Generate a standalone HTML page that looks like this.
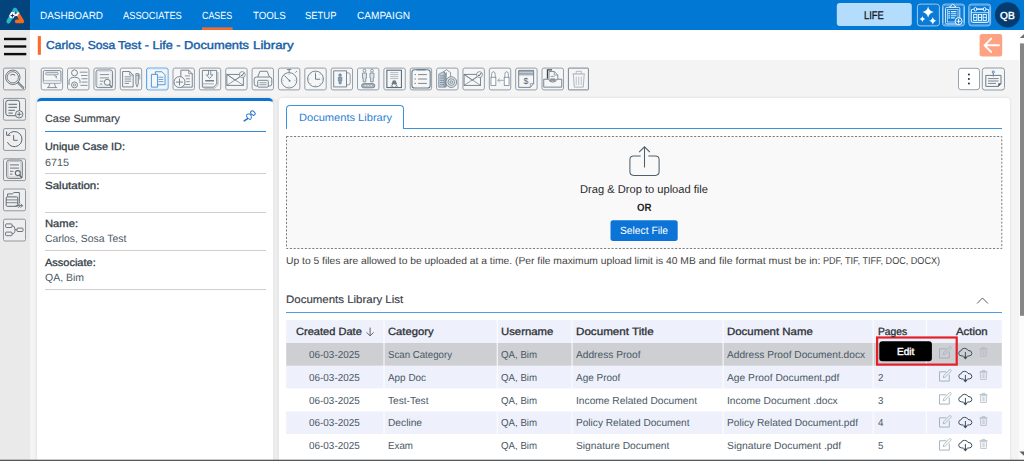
<!DOCTYPE html>
<html lang="en"><head><meta charset="utf-8"><title>Documents Library</title>
<style>
html,body{margin:0;padding:0}
body{width:1024px;height:461px;overflow:hidden;position:relative;background:#f4f4f4;font-family:'Liberation Sans',sans-serif;text-rendering:geometricPrecision}
.a{position:absolute;box-sizing:border-box}
.t{position:absolute;white-space:pre;line-height:14px;transform-origin:0 0}
svg{position:absolute;overflow:visible}
.ib{position:absolute;box-sizing:border-box;border:1px solid #8d9aa6;border-radius:2.5px;background:#f6f6f6;box-shadow:inset 0 0 0 1px #e3e6ea}
</style></head><body>

<div class="a" style="left:0;top:0;width:1024px;height:29.8px;background:#0078d4"></div>
<div class="a" style="left:0;top:0;width:30px;height:29.8px;background:#04447c"></div>
<div class="a" style="left:0;top:29.8px;width:30px;height:432px;background:#eaeaea"></div>
<div class="a" style="left:30px;top:29.8px;width:989px;height:29.8px;background:#fff"></div>
<div class="a" style="left:1018.6px;top:29.8px;width:5.4px;height:432px;background:#fbfbfb"></div>
<div class="a" style="left:37.3px;top:97.7px;width:236px;height:370px;background:#fff;border-top:3px solid #0b74d1;border-radius:4.5px 4.5px 0 0;box-shadow:0 0 3px rgba(0,0,0,.15)"></div>
<div class="a" style="left:273.3px;top:99px;width:5.2px;height:362px;background:linear-gradient(90deg,#e6e6e6,#eeeeee 40%,#ececec)"></div>
<div class="a" style="left:45.4px;top:131px;width:220.4px;height:1px;background:#2f8bdc"></div>
<div class="a" style="left:45.4px;top:173.0px;width:220.4px;height:1px;background:#cfcfcf"></div>
<div class="a" style="left:45.4px;top:211.5px;width:220.4px;height:1px;background:#cfcfcf"></div>
<div class="a" style="left:45.4px;top:250.0px;width:220.4px;height:1px;background:#cfcfcf"></div>
<div class="a" style="left:45.4px;top:288.5px;width:220.4px;height:1px;background:#cfcfcf"></div>
<div class="a" style="left:278.5px;top:98px;width:731.6px;height:370px;background:#fff;border-radius:3.5px 3.5px 0 0;box-shadow:0 0 3px rgba(0,0,0,.13)"></div>
<div class="a" style="left:286px;top:128px;width:716px;height:1px;background:#3b93e0"></div>
<div class="a" style="left:286px;top:105.3px;width:117.8px;height:24px;background:#fff;border:1px solid #3b93e0;border-bottom:none;border-radius:4px 4px 0 0"></div>
<div class="a" style="left:286px;top:312px;width:716px;height:1px;background:#4a9fe8"></div>
<svg style="left:0;top:0" width="1024" height="461" viewBox="0 0 1024 461"><rect x="202" y="27.4" width="30.6" height="2.5" fill="#ff6a2b"/>
<rect x="836.8" y="3" width="75" height="23" rx="3" fill="#b4dcfc"/>
<rect x="917.40" y="4.10" width="22.00" height="21.80" rx="2.6" fill="#0a7bd7" stroke="#9acbf3" stroke-width="1"/>
<rect x="942.50" y="4.10" width="22.00" height="21.80" rx="2.6" fill="#0a7bd7" stroke="#9acbf3" stroke-width="1"/>
<rect x="968.80" y="4.10" width="21.80" height="21.80" rx="2.6" fill="#0a7bd7" stroke="#9acbf3" stroke-width="1"/>
<rect x="943.6" y="5.2" width="19.8" height="19.6" rx="1.6" fill="none" stroke="#6db3ee" stroke-width="0.9"/>
<rect x="969.9" y="5.2" width="19.6" height="19.6" rx="1.6" fill="none" stroke="#6db3ee" stroke-width="0.9"/>
<g transform="translate(0 0)"><path d="M928.1 6.5Q929.1080000000001 11.091999999999999 933.7 12.1Q929.1080000000001 13.108 928.1 17.7Q927.092 13.108 922.5 12.1Q927.092 11.091999999999999 928.1 6.5zM922.4 16.3Q922.904 18.596 925.1999999999999 19.1Q922.904 19.604000000000003 922.4 21.900000000000002Q921.896 19.604000000000003 919.6 19.1Q921.896 18.596 922.4 16.3zM932.8 16.900000000000002Q933.502 20.098 936.6999999999999 20.8Q933.502 21.502000000000002 932.8 24.7Q932.098 21.502000000000002 928.9 20.8Q932.098 20.098 932.8 16.900000000000002z" fill="#fff"/></g>
<g transform="translate(0 0)"><rect x="945.6" y="7.3" width="14.2" height="16.6" rx="1.2" fill="none" stroke="#dcecfb" stroke-width="1"/>
<rect x="947.4" y="9.6" width="10.6" height="12.4" fill="none" stroke="#dcecfb" stroke-width="0.7"/>
<path d="M949.6 7.2Q949.8 5.6 951.4 5.6Q951.6 4.2 952.7 4.2Q953.8 4.2 954 5.6Q955.6 5.6 955.8 7.2z" fill="#0a7bd7" stroke="#fff" stroke-width="0.9"/>
<path d="M948.4 11.6h1.4M948.4 13.7h1.4M948.4 15.8h1.4M948.4 17.9h1.4" stroke="#fff" stroke-width="1.2"/>
<path d="M950.8 11.6h5.6M950.8 13.7h5.6M950.8 15.8h5.6M950.8 17.9h4" stroke="#dcecfb" stroke-width="1.1"/>
<circle cx="958.6" cy="21.2" r="3.5" fill="#0a7bd7" stroke="#fff" stroke-width="1"/>
<path d="M956.4 21.2h4.4M958.6 19v4.4" stroke="#fff" stroke-width="1.1"/></g>
<g transform="translate(0 0)"><rect x="971.3" y="9.2" width="17.4" height="13.2" rx="1.8" fill="none" stroke="#dcecfb" stroke-width="1.1"/>
<path d="M971.6 12.6h16.8" stroke="#dcecfb" stroke-width="0.8"/>
<ellipse cx="975.4" cy="9.2" rx="1.3" ry="1.8" fill="#0a7bd7" stroke="#fff" stroke-width="0.9"/><ellipse cx="984.6" cy="9.2" rx="1.3" ry="1.8" fill="#0a7bd7" stroke="#fff" stroke-width="0.9"/>
<path d="M976.8 9h6.4" stroke="#fff" stroke-width="0.9"/>
<rect x="973.7" y="14.4" width="3.2" height="6" fill="none" stroke="#fff" stroke-width="0.9"/><rect x="978.4" y="14.4" width="3.2" height="6" fill="none" stroke="#fff" stroke-width="0.9"/><rect x="983.1" y="14.4" width="3.2" height="6" fill="none" stroke="#fff" stroke-width="0.9"/>
<path d="M973.7 17.4h3.2M978.4 17.4h3.2M983.1 17.4h3.2" stroke="#fff" stroke-width="0.8"/></g>
<circle cx="1007.5" cy="14.8" r="12.6" fill="#053b6e"/>
<g transform="translate(0 0)"><path d="M8.4 21.6L15 9.8" stroke="#2bb6c6" stroke-width="4" stroke-linecap="round" fill="none"/>
<path d="M15 9.8L17.6 13.4" stroke="#2bb6c6" stroke-width="4" stroke-linecap="round" fill="none"/>
<path d="M18.6 15.2L22.3 21.4H16.8" stroke="#f26b1e" stroke-width="3.8" stroke-linecap="round" stroke-linejoin="round" fill="none"/>
<path d="M9.2 15.4L11.2 12L19.4 12.4L17.6 15.8L14.6 16.2L13.2 18.6L10 17.8z" fill="#fff"/>
<path d="M12.4 13.2L13 15L14.8 15.6L13 16.2L12.4 18L11.8 16.2L10 15.6L11.8 15z" fill="#14246b"/>
<path d="M15.8 11.2L16.3 12.4L17.5 12.9L16.3 13.4L15.8 14.6L15.3 13.4L14.1 12.9L15.3 12.4z" fill="#14246b"/></g>
<rect x="4" y="37.8" width="22.3" height="2.4" fill="#0c0c0c"/>
<rect x="4" y="45.3" width="22.3" height="2.4" fill="#0c0c0c"/>
<rect x="4" y="52.9" width="22.3" height="2.4" fill="#0c0c0c"/>
<rect x="37.8" y="36.1" width="3.1" height="18.7" fill="#ff6a2b"/>
<rect x="979.6" y="34" width="22.6" height="22.4" rx="2.5" fill="#ffa183"/>
<g transform="translate(979.6 34)"><path d="M19.4 11.3H5.4M11.6 4.6L4.9 11.3l6.7 6.7" fill="none" stroke="#fff" stroke-width="1.9" stroke-linecap="round" stroke-linejoin="round"/></g>
<rect x="1020" y="43.4" width="4" height="272.4" fill="#868686"/>
<g transform="translate(1018.6 29.8)"><path d="M1.2 8.1L5.4 4.2V8.1z" fill="#6c6c6c"/><path d="M0.8 421.6H5.4V426z" fill="#606060"/></g>
<rect x="3.50" y="68.10" width="22.00" height="21.80" rx="1.5" fill="#eeeeee" stroke="#8f989f" stroke-width="1"/>
<g transform="translate(3 67.6)"><circle cx="9.8" cy="9.7" r="7.2" fill="none" stroke="#5d6870" stroke-width="0.9"/><circle cx="9.8" cy="9.7" r="5.6" fill="none" stroke="#5d6870" stroke-width="0.8"/><path d="M7.4 7.6Q9.8 6 12.2 7.6" fill="none" stroke="#5d6870" stroke-width="1"/><path d="M15.2 15.2L20.2 20.2" stroke="#5d6870" stroke-width="2.1" stroke-linecap="round"/><path d="M15.2 15.2L20.2 20.2" stroke="#e8e8e8" stroke-width="0.7" stroke-linecap="round"/></g>
<rect x="3.50" y="98.40" width="22.00" height="21.80" rx="1.5" fill="#eeeeee" stroke="#8f989f" stroke-width="1"/>
<g transform="translate(3 97.9)"><rect x="2.8" y="2.4" width="13.8" height="15.4" rx="2.4" fill="none" stroke="#5d6870" stroke-width="1"/><path d="M5.4 6.4h8.6M5.4 9.4h8.6M5.4 12.4h6.4M5.4 15.2h4.4" stroke="#5d6870" stroke-width="1"/><circle cx="16.2" cy="16.4" r="3.7" fill="#efefef" stroke="#5d6870" stroke-width="0.9"/><path d="M13.9 16.4h4.6M16.2 14.1v4.6" stroke="#5d6870" stroke-width="0.9"/></g>
<rect x="3.50" y="128.60" width="22.00" height="21.80" rx="1.5" fill="#eeeeee" stroke="#8f989f" stroke-width="1"/>
<g transform="translate(3 128.1)"><path d="M5.2 6.6A7.6 7.6 0 1 1 4.4 14" fill="none" stroke="#5d6870" stroke-width="1"/><path d="M3.6 3.4V7.2H7.4" fill="none" stroke="#5d6870" stroke-width="1"/><path d="M10.6 7V12.2H14.6" fill="none" stroke="#5d6870" stroke-width="1"/></g>
<rect x="3.50" y="158.80" width="22.00" height="21.80" rx="1.5" fill="#eeeeee" stroke="#8f989f" stroke-width="1"/>
<g transform="translate(3 158.3)"><rect x="3.6" y="1.8" width="15.8" height="18.4" rx="2.6" fill="none" stroke="#5d6870" stroke-width="0.8"/><rect x="5" y="3.2" width="13" height="15.6" rx="1.8" fill="none" stroke="#9aa3aa" stroke-width="0.6"/><path d="M7 6.6h9M7 9.8h9M7 13h3.4M7 15.8h2.4" stroke="#5d6870" stroke-width="0.9"/><circle cx="14.8" cy="14.8" r="2.5" fill="#eeeeee" stroke="#5d6870" stroke-width="1.1"/><path d="M16.6 16.8L19 19.6" stroke="#5d6870" stroke-width="1.5"/></g>
<rect x="3.50" y="189.00" width="22.00" height="21.80" rx="1.5" fill="#eeeeee" stroke="#8f989f" stroke-width="1"/>
<g transform="translate(3 188.5)"><path d="M4.6 8.2V5.4H9.6L10.8 4h5.6V15" fill="none" stroke="#5d6870" stroke-width="0.9"/><rect x="3.2" y="8.4" width="11.6" height="9.4" rx="1" fill="none" stroke="#5d6870" stroke-width="1"/><path d="M3.4 11.4h11.2M3.4 14.2h11.2" stroke="#5d6870" stroke-width="0.8"/><path d="M12.6 17.2h7M17.6 15.2l2 2-2 2M15.2 15.2l2 2-2 2" fill="none" stroke="#5d6870" stroke-width="0.9"/></g>
<rect x="3.50" y="219.20" width="22.00" height="21.80" rx="1.5" fill="#eeeeee" stroke="#8f989f" stroke-width="1"/>
<g transform="translate(3 218.7)"><rect x="2.6" y="5.2" width="6.4" height="3.6" rx="0.8" fill="none" stroke="#5d6870" stroke-width="0.9"/><rect x="2.6" y="13.4" width="6.4" height="3.6" rx="0.8" fill="none" stroke="#5d6870" stroke-width="0.9"/><rect x="14" y="9.4" width="6" height="3.4" rx="0.8" fill="none" stroke="#5d6870" stroke-width="0.9"/><path d="M9 7Q12 7 12 11Q12 15.2 9 15.2M12 11.1h2" fill="none" stroke="#5d6870" stroke-width="0.9"/></g>
<rect x="41.20" y="68.10" width="21.40" height="21.80" rx="1.8" fill="#f6f6f6" stroke="#929ea9" stroke-width="1"/>
<g transform="translate(39.80 66.68) scale(1.1)"><rect x="3.2" y="3.6" width="16" height="11.6" rx="1" fill="none" stroke="#6a7b89" stroke-width="0.82"/><path d="M3.4 12.6h15.6" stroke="#6a7b89" stroke-width="0.57"/><rect x="5.2" y="5.2" width="11.6" height="2.2" rx="1.1" fill="#dfe4e8" stroke="#6a7b89" stroke-width="0.57"/><rect x="3.4" y="12.6" width="15.6" height="2.6" fill="#e3e7ea"/><path d="M13 8l2.6 1.2-1 .4.8 1.2" fill="none" stroke="#6a7b89" stroke-width="0.66"/><path d="M9 15.4L8 18.8M13.4 15.4l1 3.4M6.6 19h9.2" stroke="#6a7b89" stroke-width="0.74"/></g>
<rect x="67.56" y="68.10" width="21.40" height="21.80" rx="1.8" fill="#f6f6f6" stroke="#929ea9" stroke-width="1"/>
<g transform="translate(66.16 66.68) scale(1.1)"><circle cx="7.6" cy="5.6" r="2.7" fill="none" stroke="#6a7b89" stroke-width="0.82"/><path d="M2.6 16.6V13.4Q2.6 9.6 7.6 9.6Q12.6 9.6 12.6 13.4V15" fill="none" stroke="#6a7b89" stroke-width="0.82"/><path d="M12.4 5h7M13.6 8h5.8M14 11h5.4M14 14h5.4M13 17h6.4" stroke="#6a7b89" stroke-width="0.74"/><circle cx="7.6" cy="16.6" r="2.7" fill="#f6f6f6" stroke="#6a7b89" stroke-width="0.82"/><circle cx="7.6" cy="16.6" r="1" fill="none" stroke="#6a7b89" stroke-width="0.66"/></g>
<rect x="93.92" y="68.10" width="21.40" height="21.80" rx="1.8" fill="#f6f6f6" stroke="#929ea9" stroke-width="1"/>
<g transform="translate(92.52 66.68) scale(1.1)"><rect x="3.2" y="3" width="15" height="16" rx="2" fill="none" stroke="#6a7b89" stroke-width="0.82"/><rect x="4.6" y="4.4" width="12.2" height="13.2" rx="1.2" fill="none" stroke="#b4bec7" stroke-width="0.41"/><path d="M6.6 7.2h8.4M6.6 10.2h8.4M6.6 13.2h3.4M6.6 15.8h2.4" stroke="#6a7b89" stroke-width="0.74"/><circle cx="13.4" cy="14.2" r="2.7" fill="#f6f6f6" stroke="#6a7b89" stroke-width="0.90"/><path d="M15.4 16.2L18 19" stroke="#6a7b89" stroke-width="1.23"/></g>
<rect x="120.28" y="68.10" width="21.40" height="21.80" rx="1.8" fill="#f6f6f6" stroke="#929ea9" stroke-width="1"/>
<g transform="translate(118.88 66.68) scale(1.1)"><path d="M3.4 4.4H9.8L13 7.6V18.4H3.4z" fill="none" stroke="#6a7b89" stroke-width="0.82"/><path d="M9.8 4.4V7.6H13" fill="none" stroke="#6a7b89" stroke-width="0.66"/><path d="M5.2 9.2h6M5.2 11.2h6M5.2 13.2h6M5.2 15.2h4" stroke="#6a7b89" stroke-width="0.74"/><path d="M15.4 6.2H17.8V15.2L16.6 18.6 15.4 15.2z" fill="#d5dbe0" stroke="#6a7b89" stroke-width="0.66"/><path d="M15.4 8h2.4" stroke="#6a7b89" stroke-width="0.49"/><path d="M17.8 7.2h1.2v4.4" fill="none" stroke="#6a7b89" stroke-width="0.57"/></g>
<rect x="146.64" y="68.10" width="21.40" height="21.80" rx="1.8" fill="#f6f6f6" stroke="#4c9be6" stroke-width="1"/><rect x="147.64" y="69.10" width="19.40" height="19.80" rx="0.8" fill="none" stroke="#d6e8f9" stroke-width="1"/>
<g transform="translate(145.24 66.68) scale(1.1)"><path d="M9.2 4.6H15.2L18 7.4V16.4H9.2z" fill="#f6f6f6" stroke="#3f8edc" stroke-width="0.82"/><path d="M12 9.6h4.4M12 11.6h4.4M12 13.6h4.4" stroke="#3f8edc" stroke-width="0.74"/><path d="M5.6 7H11.2V18.6H5.6z" fill="#f6f6f6" stroke="#3f8edc" stroke-width="0.82"/></g>
<rect x="173.00" y="68.10" width="21.40" height="21.80" rx="1.8" fill="#f6f6f6" stroke="#929ea9" stroke-width="1"/>
<g transform="translate(171.60 66.68) scale(1.1)"><path d="M8.4 3.2H15.6L18.8 6.4V18.6H8.4z" fill="none" stroke="#6a7b89" stroke-width="0.82"/><path d="M15.6 3.2V6.4H18.8" fill="none" stroke="#6a7b89" stroke-width="0.66"/><path d="M12 8.4h4.6M13 11h3.6M13.4 13.6h3.2M12.4 16.2h4.2" stroke="#6a7b89" stroke-width="0.74"/><circle cx="7.2" cy="14" r="5" fill="#f6f6f6" stroke="#6a7b89" stroke-width="0.82"/><path d="M4 14h6.4M7.2 10.8v6.4" stroke="#6a7b89" stroke-width="0.82"/></g>
<rect x="199.36" y="68.10" width="21.40" height="21.80" rx="1.8" fill="#f6f6f6" stroke="#929ea9" stroke-width="1"/>
<g transform="translate(197.96 66.68) scale(1.1)"><path d="M4 3.4H17V15.6L14.4 18.6H4z" fill="none" stroke="#6a7b89" stroke-width="0.82"/><path d="M5.4 19.6H15.2L18.2 16.4V5" fill="none" stroke="#6a7b89" stroke-width="0.49"/><path d="M9.6 3.6V7.4H7.6L10.6 10.8 13.6 7.4H11.6V3.6" fill="none" stroke="#6a7b89" stroke-width="0.74"/><path d="M6.6 12.8h8" stroke="#6a7b89" stroke-width="1.31"/><path d="M4.2 15.6h10.2" stroke="#6a7b89" stroke-width="0.57"/></g>
<rect x="225.72" y="68.10" width="21.40" height="21.80" rx="1.8" fill="#f6f6f6" stroke="#929ea9" stroke-width="1"/>
<g transform="translate(224.32 66.68) scale(1.1)"><rect x="2.3" y="7" width="15" height="10" fill="none" stroke="#6a7b89" stroke-width="0.82"/><path d="M2.3 7L17.3 17M17.3 7L2.3 17M2.3 7L9.8 12.4 17.3 7" fill="none" stroke="#6a7b89" stroke-width="0.66"/><circle cx="16.3" cy="7.2" r="2.7" fill="#f6f6f6" stroke="#6a7b89" stroke-width="0.66"/><path d="M14.9 7.4l1 1 2-2.6" fill="none" stroke="#4f6070" stroke-width="0.90"/></g>
<rect x="252.08" y="68.10" width="21.40" height="21.80" rx="1.8" fill="#f6f6f6" stroke="#929ea9" stroke-width="1"/>
<g transform="translate(250.68 66.68) scale(1.1)"><path d="M6.4 9.4L8.4 4.2H15L17 9.4" fill="none" stroke="#6a7b89" stroke-width="0.82"/><rect x="3.2" y="9.4" width="16" height="8.2" rx="2" fill="none" stroke="#6a7b89" stroke-width="0.82"/><rect x="6.4" y="12.4" width="9.6" height="6.2" rx="0.8" fill="#f6f6f6" stroke="#6a7b89" stroke-width="0.82"/><path d="M8 14.6h6.4M8 16.4h6.4" stroke="#6a7b89" stroke-width="0.66"/></g>
<rect x="278.44" y="68.10" width="21.40" height="21.80" rx="1.8" fill="#f6f6f6" stroke="#929ea9" stroke-width="1"/>
<g transform="translate(277.04 66.68) scale(1.1)"><circle cx="11" cy="12.4" r="7" fill="none" stroke="#6a7b89" stroke-width="0.82"/><path d="M9 2.6h4M11 2.6V5.4M16.6 5.4l1.4-1.4" stroke="#6a7b89" stroke-width="0.82"/><path d="M6.6 8l4.4 4.4" stroke="#6a7b89" stroke-width="0.90"/><circle cx="11.4" cy="12.8" r="0.9" fill="#6a7b89"/><path d="M11 6.6v.8M11 17.4v.8M5.2 12.4h.8M16 12.4h.8" stroke="#6a7b89" stroke-width="0.57"/></g>
<rect x="304.80" y="68.10" width="21.40" height="21.80" rx="1.8" fill="#f6f6f6" stroke="#929ea9" stroke-width="1"/>
<g transform="translate(303.40 66.68) scale(1.1)"><circle cx="11" cy="11.2" r="7.2" fill="none" stroke="#6a7b89" stroke-width="0.82"/><path d="M11 6V11.4H15.2" fill="none" stroke="#6a7b89" stroke-width="0.90"/><path d="M11 4.8v.8M11 16.8v.8M4.8 11.2h.8M16.6 11.2h.8M6.6 6.8l.5.5M15.4 6.8l-.5.5M6.6 15.6l.5-.5M15.4 15.6l-.5-.5" stroke="#6a7b89" stroke-width="0.57"/></g>
<rect x="331.16" y="68.10" width="21.40" height="21.80" rx="1.8" fill="#f6f6f6" stroke="#929ea9" stroke-width="1"/>
<g transform="translate(329.76 66.68) scale(1.1)"><rect x="3.6" y="3.8" width="11.6" height="14.6" fill="none" stroke="#6a7b89" stroke-width="0.82"/><path d="M15.2 5.6H16.6Q18.6 5.6 18.6 7.6V14.6Q18.6 16.6 16.6 16.6H15.2" fill="none" stroke="#6a7b89" stroke-width="0.66"/><circle cx="9.4" cy="7.6" r="1.2" fill="#7fa2bd" stroke="#6a7b89" stroke-width="0.57"/><path d="M7.8 9.4H11V13H10.4V15.6H8.4V13H7.8z" fill="#7fa2bd" stroke="#6a7b89" stroke-width="0.57"/></g>
<rect x="357.52" y="68.10" width="21.40" height="21.80" rx="1.8" fill="#f6f6f6" stroke="#929ea9" stroke-width="1"/>
<g transform="translate(356.12 66.68) scale(1.1)"><circle cx="7.6" cy="3.6" r="1.3" fill="none" stroke="#6a7b89" stroke-width="0.66"/><circle cx="14.4" cy="3.6" r="1.3" fill="none" stroke="#6a7b89" stroke-width="0.66"/><path d="M5.8 5.8H9.4V10.4H8.8V13.8H6.4V10.4H5.8z" fill="#dbe5ed" stroke="#6a7b89" stroke-width="0.66"/><path d="M12.6 5.8H16.2V10.4H15.6V13.8H13.2V10.4H12.6z" fill="#dbe5ed" stroke="#6a7b89" stroke-width="0.66"/><rect x="5" y="15.4" width="12" height="3.8" rx="1.9" fill="#a4b0ba" stroke="#6a7b89" stroke-width="0.74"/><path d="M7.6 17.3h1.6M10.2 17.3h1.6M12.8 17.3h1.6" stroke="#fff" stroke-width="0.74"/></g>
<rect x="383.88" y="68.10" width="21.40" height="21.80" rx="1.8" fill="#f6f6f6" stroke="#929ea9" stroke-width="1"/>
<g transform="translate(382.48 66.68) scale(1.1)"><rect x="4" y="3.2" width="13.2" height="15.8" fill="none" stroke="#4f6070" stroke-width="0.90"/><path d="M7 5.4h7.4M7 7.2h7.4M7 9h7.4M7 10.8h7.4" stroke="#9aa7b2" stroke-width="0.66"/><circle cx="10.7" cy="14.2" r="1.9" fill="#6a7b89"/><path d="M7.8 18.2l1.6-2.4M13.6 18.2l-1.6-2.4M8.2 15.4h5M8.8 18.2h1M11.6 18.2h1" stroke="#6a7b89" stroke-width="0.90"/></g>
<rect x="410.24" y="68.10" width="21.40" height="21.80" rx="1.8" fill="#f6f6f6" stroke="#929ea9" stroke-width="1"/>
<g transform="translate(408.84 66.68) scale(1.1)"><rect x="2.8" y="2.8" width="16.6" height="16.6" rx="2.4" fill="none" stroke="#6a7b89" stroke-width="0.98"/><path d="M7 2.8h8.2" stroke="#6a7b89" stroke-width="1.07"/><path d="M8.4 7.2h8M8.4 11.2h8M8.4 15.2h8" stroke="#6a7b89" stroke-width="0.82"/><path d="M5.2 7.2h1.2M5.2 11.2h1.2M5.2 15.2h1.2" stroke="#6a7b89" stroke-width="0.90"/></g>
<rect x="436.60" y="68.10" width="21.40" height="21.80" rx="1.8" fill="#f6f6f6" stroke="#929ea9" stroke-width="1"/>
<g transform="translate(435.20 66.68) scale(1.1)"><path d="M3.2 18.6V6.8L7.4 4.6 9.4 6V18.6z" fill="#c5ced6" stroke="#6a7b89" stroke-width="0.66"/><path d="M8.2 18.6V4L10.4 2.8 14 5.4V9" fill="none" stroke="#6a7b89" stroke-width="0.66"/><path d="M4.4 8.4h3.6M4.4 10.4h3.6M4.4 12.4h3.6M4.4 14.4h3.6M4.4 16.4h3.6" stroke="#6a7b89" stroke-width="0.66"/><path d="M10.2 5v13.6" stroke="#6a7b89" stroke-width="0.57"/><circle cx="14.6" cy="14" r="4.9" fill="#dfe4e8" stroke="#6a7b89" stroke-width="0.74"/><circle cx="14.6" cy="14" r="3" fill="none" stroke="#6a7b89" stroke-width="0.66"/><circle cx="14.6" cy="14" r="1.2" fill="none" stroke="#6a7b89" stroke-width="0.66"/></g>
<rect x="462.96" y="68.10" width="21.40" height="21.80" rx="1.8" fill="#f6f6f6" stroke="#929ea9" stroke-width="1"/>
<g transform="translate(461.56 66.68) scale(1.1)"><rect x="2.3" y="7" width="15" height="10" fill="none" stroke="#6a7b89" stroke-width="0.82"/><path d="M2.3 7L17.3 17M17.3 7L2.3 17M2.3 7L9.8 12.4 17.3 7" fill="none" stroke="#6a7b89" stroke-width="0.66"/><circle cx="16.3" cy="7.2" r="2.7" fill="#f6f6f6" stroke="#6a7b89" stroke-width="0.66"/><path d="M14.9 7.4l1 1 2-2.6" fill="none" stroke="#4f6070" stroke-width="0.90"/></g>
<rect x="489.32" y="68.10" width="21.40" height="21.80" rx="1.8" fill="#f6f6f6" stroke="#929ea9" stroke-width="1"/>
<g transform="translate(487.92 66.68) scale(1.1)"><path d="M3.4 9.6V7Q3.4 4.6 5 4.6Q6.6 4.6 6.6 7V9.6" fill="#fff" stroke="#6a7b89" stroke-width="0.66"/><rect x="2.8" y="9.6" width="4.4" height="7.4" fill="#fff" stroke="#6a7b89" stroke-width="0.66"/><path d="M15.4 9.6V7Q15.4 4.6 17 4.6Q18.6 4.6 18.6 7V9.6" fill="#fff" stroke="#6a7b89" stroke-width="0.66"/><rect x="14.8" y="9.6" width="4.4" height="7.4" fill="#fff" stroke="#6a7b89" stroke-width="0.66"/><path d="M14.4 12.4H9M10.8 10.6L9 12.4l1.8 1.8" fill="none" stroke="#8d9aa5" stroke-width="0.74"/></g>
<rect x="515.68" y="68.10" width="21.40" height="21.80" rx="1.8" fill="#f6f6f6" stroke="#929ea9" stroke-width="1"/>
<g transform="translate(514.28 66.68) scale(1.1)"><path d="M4 3.4H17.6V15.4L14.6 18.8H4z" fill="none" stroke="#6a7b89" stroke-width="0.82"/><path d="M4 4.6h13.6M4 6h13.6M4 7.4h13.6" stroke="#6a7b89" stroke-width="0.74"/><path d="M14.6 18.8V15.4H17.6" fill="none" stroke="#6a7b89" stroke-width="0.57"/><text x="8.4" y="16.2" font-family="Liberation Sans, sans-serif" font-size="8" font-weight="400" fill="#4f6070">$</text></g>
<rect x="542.04" y="68.10" width="21.40" height="21.80" rx="1.8" fill="#f6f6f6" stroke="#929ea9" stroke-width="1"/>
<g transform="translate(540.64 66.68) scale(1.1)"><path d="M6.2 11V2.8H10.4" fill="none" stroke="#39454f" stroke-width="1.15"/><path d="M7.6 11V4.4H12.4L15.6 7.6V11" fill="#f6f6f6" stroke="#6a7b89" stroke-width="0.74"/><path d="M12.4 4.4V7.6H15.6" fill="none" stroke="#6a7b89" stroke-width="0.57"/><path d="M9.2 8.8h3.4" stroke="#6a7b89" stroke-width="0.66"/><path d="M2.8 18.6V11.4H7.4Q7.6 14 11 14Q14.4 14 14.6 11.4H19.2V18.6z" fill="#f6f6f6" stroke="#6a7b89" stroke-width="0.82"/><rect x="8.6" y="11" width="4.8" height="1.8" rx="0.9" fill="#8d9aa5" stroke="#6a7b89" stroke-width="0.49"/></g>
<rect x="568.40" y="68.10" width="20.00" height="21.80" rx="0.6" fill="#f6f6f6" stroke="#76848f" stroke-width="1"/>
<g transform="translate(567.00 66.68) scale(1.1)"><path d="M5 6.6H16.4" stroke="#a2aeb8" stroke-width="0.98"/><path d="M8.4 6.2V4.2H13V6.2" fill="none" stroke="#a2aeb8" stroke-width="0.74"/><path d="M5.8 7.2L6.6 18.6H14.8L15.6 7.2" fill="none" stroke="#a2aeb8" stroke-width="0.82"/><path d="M8.4 9v7.8M10.7 9v7.8M13 9v7.8" stroke="#a2aeb8" stroke-width="0.66"/></g>
<rect x="958.50" y="68.30" width="21.00" height="21.40" rx="2.5" fill="#fff" stroke="#98a3ad" stroke-width="1"/>
<g transform="translate(958 67.8)"><circle cx="10.9" cy="6.6" r="1" fill="#243240"/><circle cx="10.9" cy="11.2" r="1" fill="#243240"/><circle cx="10.9" cy="15.8" r="1" fill="#243240"/></g>
<rect x="982.30" y="68.00" width="22.20" height="22.00" rx="2.5" fill="#f6f6f6" stroke="#8d9aa6" stroke-width="1"/>
<g transform="translate(981.8 67.6)"><path d="M4 7.8H19.2V16L16.6 18.8H4z" fill="none" stroke="#6a7b89" stroke-width="1"/><path d="M16.6 18.8V16H19.2z" fill="#2f4d7a" stroke="#6a7b89" stroke-width="0.6"/><path d="M6.2 11h10.6M6.2 13.4h10.6M6.2 15.8h8" stroke="#6a7b89" stroke-width="0.9"/><path d="M11.5 5.4V9" stroke="#6a7b89" stroke-width="0.9"/><circle cx="11.5" cy="4.4" r="1.1" fill="#f6f6f6" stroke="#3b6fb0" stroke-width="0.8"/></g>
<g transform="translate(0 0)"><path d="M244.2 120.9L248 118.4" stroke="#1c72cc" stroke-width="1.5" stroke-linecap="round"/>
<path d="M246.7 114.5Q248.6 113.4 250.7 114.3L251.3 116.6Q251.6 118.6 250.3 119.7Q248.3 118.9 246.8 117Q246.2 115.7 246.7 114.5z" fill="#fff" stroke="#1c72cc" stroke-width="1"/>
<ellipse cx="252.9" cy="113.1" rx="2.5" ry="1.8" transform="rotate(42 252.9 113.1)" fill="#fff" stroke="#1c72cc" stroke-width="1"/></g>
<rect x="286.6" y="136.6" width="714.8" height="111.8" fill="#f9f9f9"/>
<g transform="translate(286 136)"><rect x="0.5" y="0.5" width="715.3" height="112" fill="none" stroke="#7c7c7c" stroke-width="1" stroke-dasharray="2.1 1.64"/></g>
<g transform="translate(629.3 146)"><path d="M11.4 10H4.4Q0.6 10 0.6 13.8V25.6Q0.6 29.4 4.4 29.4H26Q29.8 29.4 29.8 25.6V13.8Q29.8 10 26 10H19" fill="none" stroke="#4f5f6e" stroke-width="1.05"/><path d="M15.2 21.4V0.8M9.8 6.2L15.2 0.8L20.6 6.2" fill="none" stroke="#4f5f6e" stroke-width="1.05"/></g>
<rect x="610.5" y="220.3" width="67.2" height="20.6" rx="2.6" fill="#0b74d6"/>
<g transform="translate(976.8 297.3)"><path d="M0.3 6.2L5.7 0.7l5.4 5.5" fill="none" stroke="#5b5b5b" stroke-width="1"/></g>
<rect x="286.2" y="320.1" width="715.6" height="22.92" fill="#eef1fb"/>
<rect x="286.2" y="343.0" width="715.6" height="22.82" fill="#cdcfd3"/>
<rect x="286.2" y="365.8" width="715.6" height="22.82" fill="#eef1fb"/>
<rect x="286.2" y="388.6" width="715.6" height="22.82" fill="#ffffff"/>
<rect x="286.2" y="411.4" width="715.6" height="22.82" fill="#eef1fb"/>
<rect x="286.2" y="434.2" width="715.6" height="22.82" fill="#ffffff"/>
<rect x="383.4" y="320.1" width="1.2" height="136.9" fill="#fff" fill-opacity="0.78"/>
<rect x="496.7" y="320.1" width="1.2" height="136.9" fill="#fff" fill-opacity="0.78"/>
<rect x="571.5" y="320.1" width="1.2" height="136.9" fill="#fff" fill-opacity="0.78"/>
<rect x="722.5" y="320.1" width="1.2" height="136.9" fill="#fff" fill-opacity="0.78"/>
<rect x="872.6" y="320.1" width="1.2" height="136.9" fill="#fff" fill-opacity="0.78"/>
<rect x="925.8" y="320.1" width="1.2" height="136.9" fill="#fff" fill-opacity="0.78"/>
<g transform="translate(365.8 327.2)"><path d="M4.3 0.4V8.6M0.8 5.2L4.3 8.7l3.5-3.5" fill="none" stroke="#555" stroke-width="0.9"/></g>
<g transform="translate(939 347.2)"><path d="M7.4 1.6H0.5V10.9H10.3V4.6" fill="none" stroke="#9dadba" stroke-width="0.9"/><path d="M4.2 7.4L4.8 5.4L10.6 -0.6Q11.6 -1 12.2 0.2Q12.4 0.8 12 1.2L6.2 7z" fill="none" stroke="#9dadba" stroke-width="0.8"/></g>
<g transform="translate(958.2 347.8)"><path d="M5.2 8.2H3.6Q0.5 8 0.5 5.4Q0.6 3.2 3 2.9Q3.4 0.5 6.4 0.5Q8.8 0.5 9.8 2.6Q13.6 2.6 13.7 5.6Q13.6 8 11 8.2H9.2" fill="none" stroke="#3d4f5e" stroke-width="1"/><path d="M7.2 4.2V10.2" stroke="#3d4f5e" stroke-width="1"/><path d="M4.6 8.6L7.2 11.6L9.8 8.6z" fill="#3d4f5e"/></g>
<g transform="translate(979.4 347.0)"><path d="M0.2 1.7H8" stroke="#b3bdc6" stroke-width="1"/><path d="M2.6 1.4V0.4H5.6V1.4" fill="none" stroke="#b3bdc6" stroke-width="0.8"/><path d="M0.9 2.6L1.3 9.5H6.9L7.3 2.6z" fill="none" stroke="#b3bdc6" stroke-width="0.8"/><path d="M2.8 3.6v4.8M4.1 3.6v4.8M5.4 3.6v4.8" stroke="#b3bdc6" stroke-width="0.6"/></g>
<g transform="translate(939 370.2)"><path d="M7.4 1.6H0.5V10.9H10.3V4.6" fill="none" stroke="#9dadba" stroke-width="0.9"/><path d="M4.2 7.4L4.8 5.4L10.6 -0.6Q11.6 -1 12.2 0.2Q12.4 0.8 12 1.2L6.2 7z" fill="none" stroke="#9dadba" stroke-width="0.8"/></g>
<g transform="translate(958.2 370.8)"><path d="M5.2 8.2H3.6Q0.5 8 0.5 5.4Q0.6 3.2 3 2.9Q3.4 0.5 6.4 0.5Q8.8 0.5 9.8 2.6Q13.6 2.6 13.7 5.6Q13.6 8 11 8.2H9.2" fill="none" stroke="#3d4f5e" stroke-width="1"/><path d="M7.2 4.2V10.2" stroke="#3d4f5e" stroke-width="1"/><path d="M4.6 8.6L7.2 11.6L9.8 8.6z" fill="#3d4f5e"/></g>
<g transform="translate(979.4 370.0)"><path d="M0.2 1.7H8" stroke="#b3bdc6" stroke-width="1"/><path d="M2.6 1.4V0.4H5.6V1.4" fill="none" stroke="#b3bdc6" stroke-width="0.8"/><path d="M0.9 2.6L1.3 9.5H6.9L7.3 2.6z" fill="none" stroke="#b3bdc6" stroke-width="0.8"/><path d="M2.8 3.6v4.8M4.1 3.6v4.8M5.4 3.6v4.8" stroke="#b3bdc6" stroke-width="0.6"/></g>
<g transform="translate(939 393.2)"><path d="M7.4 1.6H0.5V10.9H10.3V4.6" fill="none" stroke="#9dadba" stroke-width="0.9"/><path d="M4.2 7.4L4.8 5.4L10.6 -0.6Q11.6 -1 12.2 0.2Q12.4 0.8 12 1.2L6.2 7z" fill="none" stroke="#9dadba" stroke-width="0.8"/></g>
<g transform="translate(958.2 393.8)"><path d="M5.2 8.2H3.6Q0.5 8 0.5 5.4Q0.6 3.2 3 2.9Q3.4 0.5 6.4 0.5Q8.8 0.5 9.8 2.6Q13.6 2.6 13.7 5.6Q13.6 8 11 8.2H9.2" fill="none" stroke="#3d4f5e" stroke-width="1"/><path d="M7.2 4.2V10.2" stroke="#3d4f5e" stroke-width="1"/><path d="M4.6 8.6L7.2 11.6L9.8 8.6z" fill="#3d4f5e"/></g>
<g transform="translate(979.4 393.0)"><path d="M0.2 1.7H8" stroke="#b3bdc6" stroke-width="1"/><path d="M2.6 1.4V0.4H5.6V1.4" fill="none" stroke="#b3bdc6" stroke-width="0.8"/><path d="M0.9 2.6L1.3 9.5H6.9L7.3 2.6z" fill="none" stroke="#b3bdc6" stroke-width="0.8"/><path d="M2.8 3.6v4.8M4.1 3.6v4.8M5.4 3.6v4.8" stroke="#b3bdc6" stroke-width="0.6"/></g>
<g transform="translate(939 416.2)"><path d="M7.4 1.6H0.5V10.9H10.3V4.6" fill="none" stroke="#9dadba" stroke-width="0.9"/><path d="M4.2 7.4L4.8 5.4L10.6 -0.6Q11.6 -1 12.2 0.2Q12.4 0.8 12 1.2L6.2 7z" fill="none" stroke="#9dadba" stroke-width="0.8"/></g>
<g transform="translate(958.2 416.8)"><path d="M5.2 8.2H3.6Q0.5 8 0.5 5.4Q0.6 3.2 3 2.9Q3.4 0.5 6.4 0.5Q8.8 0.5 9.8 2.6Q13.6 2.6 13.7 5.6Q13.6 8 11 8.2H9.2" fill="none" stroke="#3d4f5e" stroke-width="1"/><path d="M7.2 4.2V10.2" stroke="#3d4f5e" stroke-width="1"/><path d="M4.6 8.6L7.2 11.6L9.8 8.6z" fill="#3d4f5e"/></g>
<g transform="translate(979.4 416.0)"><path d="M0.2 1.7H8" stroke="#b3bdc6" stroke-width="1"/><path d="M2.6 1.4V0.4H5.6V1.4" fill="none" stroke="#b3bdc6" stroke-width="0.8"/><path d="M0.9 2.6L1.3 9.5H6.9L7.3 2.6z" fill="none" stroke="#b3bdc6" stroke-width="0.8"/><path d="M2.8 3.6v4.8M4.1 3.6v4.8M5.4 3.6v4.8" stroke="#b3bdc6" stroke-width="0.6"/></g>
<g transform="translate(939 439.2)"><path d="M7.4 1.6H0.5V10.9H10.3V4.6" fill="none" stroke="#9dadba" stroke-width="0.9"/><path d="M4.2 7.4L4.8 5.4L10.6 -0.6Q11.6 -1 12.2 0.2Q12.4 0.8 12 1.2L6.2 7z" fill="none" stroke="#9dadba" stroke-width="0.8"/></g>
<g transform="translate(958.2 439.8)"><path d="M5.2 8.2H3.6Q0.5 8 0.5 5.4Q0.6 3.2 3 2.9Q3.4 0.5 6.4 0.5Q8.8 0.5 9.8 2.6Q13.6 2.6 13.7 5.6Q13.6 8 11 8.2H9.2" fill="none" stroke="#3d4f5e" stroke-width="1"/><path d="M7.2 4.2V10.2" stroke="#3d4f5e" stroke-width="1"/><path d="M4.6 8.6L7.2 11.6L9.8 8.6z" fill="#3d4f5e"/></g>
<g transform="translate(979.4 439.0)"><path d="M0.2 1.7H8" stroke="#b3bdc6" stroke-width="1"/><path d="M2.6 1.4V0.4H5.6V1.4" fill="none" stroke="#b3bdc6" stroke-width="0.8"/><path d="M0.9 2.6L1.3 9.5H6.9L7.3 2.6z" fill="none" stroke="#b3bdc6" stroke-width="0.8"/><path d="M2.8 3.6v4.8M4.1 3.6v4.8M5.4 3.6v4.8" stroke="#b3bdc6" stroke-width="0.6"/></g></svg>
<svg style="left:0;top:0" width="1024" height="461" viewBox="0 0 1024 461"><rect x="877.1" y="337.5" width="79.6" height="27.1" fill="none" stroke="#e61e2a" stroke-width="2.2"/>
<rect x="879.3" y="341.2" width="52.6" height="20.1" rx="3" fill="#000"/>
<rect x="0" y="459.7" width="1024" height="1.4" fill="#50585c"/></svg>
<span class="t" style="left:40.20px;top:10px;font-size:10.4px;font-weight:400;color:#fff;transform:scaleX(0.9570);">DASHBOARD</span>
<span class="t" style="left:123.20px;top:10px;font-size:10.4px;font-weight:400;color:#fff;transform:scaleX(0.8958);">ASSOCIATES</span>
<span class="t" style="left:202.30px;top:10px;font-size:10.4px;font-weight:400;color:#fff;transform:scaleX(0.8571);">CASES</span>
<span class="t" style="left:252.50px;top:10px;font-size:10.4px;font-weight:400;color:#fff;transform:scaleX(0.9330);">TOOLS</span>
<span class="t" style="left:305.25px;top:10px;font-size:10.4px;font-weight:400;color:#fff;transform:scaleX(0.9089);">SETUP</span>
<span class="t" style="left:356.75px;top:10px;font-size:10.4px;font-weight:400;color:#fff;transform:scaleX(0.9697);">CAMPAIGN</span>
<span class="t" style="left:864.30px;top:9px;font-size:11.2px;font-weight:400;color:#17171f;transform:scaleX(0.8375);-webkit-text-stroke:0.3px currentColor;">LIFE</span>
<span class="t" style="left:1000.40px;top:10px;font-size:10.2px;font-weight:400;color:#fff;transform:scaleX(0.9977);-webkit-text-stroke:0.42px currentColor;">QB</span>
<span class="t" style="left:45.60px;top:39px;font-size:11.5px;font-weight:400;color:#185fa9;transform:scaleX(1.0517);-webkit-text-stroke:0.42px currentColor;">Carlos, Sosa </span>
<span class="t" style="left:118.20px;top:39px;font-size:11.5px;font-weight:400;color:#185fa9;transform:scaleX(1.0986);-webkit-text-stroke:0.42px currentColor;">Test - Life - </span>
<span class="t" style="left:184.20px;top:39px;font-size:11.5px;font-weight:400;color:#185fa9;transform:scaleX(1.1180);-webkit-text-stroke:0.42px currentColor;">Documents </span>
<span class="t" style="left:252.80px;top:39px;font-size:11.5px;font-weight:400;color:#185fa9;transform:scaleX(1.1577);-webkit-text-stroke:0.42px currentColor;">Library</span>
<span class="t" style="left:45.40px;top:112px;font-size:10.5px;font-weight:400;color:#3b4046;transform:scaleX(1.0365);-webkit-text-stroke:0.16px currentColor;">Case Summary</span>
<span class="t" style="left:45.40px;top:140px;font-size:10.5px;font-weight:400;color:#323d47;transform:scaleX(1.0383);-webkit-text-stroke:0.3px currentColor;">Unique Case ID:</span>
<span class="t" style="left:45.40px;top:156px;font-size:10.5px;font-weight:400;color:#4d5a66;transform:scaleX(1.0274);">6715</span>
<span class="t" style="left:45.40px;top:179px;font-size:10.5px;font-weight:400;color:#323d47;transform:scaleX(1.0982);-webkit-text-stroke:0.3px currentColor;">Salutation:</span>
<span class="t" style="left:45.40px;top:217px;font-size:10.5px;font-weight:400;color:#323d47;transform:scaleX(1.0667);-webkit-text-stroke:0.3px currentColor;">Name:</span>
<span class="t" style="left:45.40px;top:232px;font-size:10.5px;font-weight:400;color:#4d5a66;transform:scaleX(0.9903);">Carlos, Sosa Test</span>
<span class="t" style="left:45.40px;top:256px;font-size:10.5px;font-weight:400;color:#323d47;transform:scaleX(1.0464);-webkit-text-stroke:0.3px currentColor;">Associate:</span>
<span class="t" style="left:45.40px;top:271px;font-size:10.5px;font-weight:400;color:#4d5a66;transform:scaleX(0.9976);">QA, Bim</span>
<span class="t" style="left:298.60px;top:111px;font-size:10.5px;font-weight:400;color:#2b7fd6;transform:scaleX(1.0553);">Documents Library</span>
<span class="t" style="left:579.80px;top:183px;font-size:11.4px;font-weight:400;color:#2a2a2a;transform:scaleX(0.9765);">Drag &amp; Drop to upload file</span>
<span class="t" style="left:637.00px;top:201px;font-size:10.5px;font-weight:700;color:#222;transform:scaleX(0.9206);">OR</span>
<span class="t" style="left:619.80px;top:224px;font-size:10.5px;font-weight:400;color:#fff;transform:scaleX(0.9790);">Select File</span>
<span class="t" style="left:286.30px;top:255px;font-size:10.0px;font-weight:400;color:#444;transform:scaleX(1.0299);">Up to 5 files are allowed to be uploaded at a time. </span>
<span class="t" style="left:515.30px;top:255px;font-size:10.0px;font-weight:400;color:#444;transform:scaleX(1.0295);">(Per file maximum upload limit is 40 MB and </span>
<span class="t" style="left:719.00px;top:255px;font-size:10.0px;font-weight:400;color:#444;transform:scaleX(1.0612);">file format must be in: </span>
<span class="t" style="left:823.40px;top:255px;font-size:10.0px;font-weight:400;color:#444;transform:scaleX(0.9063);">PDF, TIF, TIFF, DOC, DOCX)</span>
<span class="t" style="left:286.20px;top:293px;font-size:10.8px;font-weight:400;color:#3b4046;transform:scaleX(1.0614);-webkit-text-stroke:0.16px currentColor;">Documents Library List</span>
<span class="t" style="left:296.20px;top:325px;font-size:10.5px;font-weight:400;color:#2b2f33;transform:scaleX(1.0536);-webkit-text-stroke:0.3px currentColor;">Created Date</span>
<span class="t" style="left:388.40px;top:325px;font-size:10.5px;font-weight:400;color:#2b2f33;transform:scaleX(1.0678);-webkit-text-stroke:0.3px currentColor;">Category</span>
<span class="t" style="left:501.25px;top:325px;font-size:10.5px;font-weight:400;color:#2b2f33;transform:scaleX(1.0797);-webkit-text-stroke:0.3px currentColor;">Username</span>
<span class="t" style="left:576.40px;top:325px;font-size:10.5px;font-weight:400;color:#2b2f33;transform:scaleX(1.1081);-webkit-text-stroke:0.3px currentColor;">Document Title</span>
<span class="t" style="left:727.20px;top:325px;font-size:10.5px;font-weight:400;color:#2b2f33;transform:scaleX(1.0891);-webkit-text-stroke:0.3px currentColor;">Document Name</span>
<span class="t" style="left:877.80px;top:325px;font-size:10.5px;font-weight:400;color:#2b2f33;transform:scaleX(0.9805);-webkit-text-stroke:0.3px currentColor;">Pages</span>
<span class="t" style="left:955.60px;top:325px;font-size:10.5px;font-weight:400;color:#2b2f33;transform:scaleX(1.0861);-webkit-text-stroke:0.3px currentColor;">Action</span>
<span class="t" style="left:309.30px;top:349px;font-size:10.2px;font-weight:400;color:#4a5864;transform:scaleX(0.9746);">06-03-2025</span>
<span class="t" style="left:388.40px;top:349px;font-size:10.2px;font-weight:400;color:#4a5864;transform:scaleX(0.9497);">Scan Category</span>
<span class="t" style="left:501.25px;top:349px;font-size:10.2px;font-weight:400;color:#4a5864;transform:scaleX(0.9516);">QA, Bim</span>
<span class="t" style="left:576.40px;top:349px;font-size:10.2px;font-weight:400;color:#4a5864;transform:scaleX(0.9990);">Address Proof</span>
<span class="t" style="left:727.20px;top:349px;font-size:10.2px;font-weight:400;color:#4a5864;transform:scaleX(0.9995);">Address Proof Document.docx</span>
<span class="t" style="left:309.30px;top:372px;font-size:10.2px;font-weight:400;color:#4a5864;transform:scaleX(0.9746);">06-03-2025</span>
<span class="t" style="left:388.40px;top:372px;font-size:10.2px;font-weight:400;color:#4a5864;transform:scaleX(0.9724);">App Doc</span>
<span class="t" style="left:501.25px;top:372px;font-size:10.2px;font-weight:400;color:#4a5864;transform:scaleX(0.9516);">QA, Bim</span>
<span class="t" style="left:576.40px;top:372px;font-size:10.2px;font-weight:400;color:#4a5864;transform:scaleX(0.9799);">Age Proof</span>
<span class="t" style="left:727.20px;top:372px;font-size:10.2px;font-weight:400;color:#4a5864;transform:scaleX(1.0066);">Age Proof Document.pdf</span>
<span class="t" style="left:877.80px;top:372px;font-size:10.2px;font-weight:400;color:#4a5864;transform:scaleX(0.9521);">2</span>
<span class="t" style="left:309.30px;top:395px;font-size:10.2px;font-weight:400;color:#4a5864;transform:scaleX(0.9746);">06-03-2025</span>
<span class="t" style="left:388.40px;top:395px;font-size:10.2px;font-weight:400;color:#4a5864;transform:scaleX(0.9935);">Test-Test</span>
<span class="t" style="left:501.25px;top:395px;font-size:10.2px;font-weight:400;color:#4a5864;transform:scaleX(0.9516);">QA, Bim</span>
<span class="t" style="left:576.40px;top:395px;font-size:10.2px;font-weight:400;color:#4a5864;transform:scaleX(1.0031);">Income Related Document</span>
<span class="t" style="left:727.20px;top:395px;font-size:10.2px;font-weight:400;color:#4a5864;transform:scaleX(1.0077);">Income Document .docx</span>
<span class="t" style="left:877.80px;top:395px;font-size:10.2px;font-weight:400;color:#4a5864;transform:scaleX(0.9521);">3</span>
<span class="t" style="left:309.30px;top:417px;font-size:10.2px;font-weight:400;color:#4a5864;transform:scaleX(0.9746);">06-03-2025</span>
<span class="t" style="left:388.40px;top:417px;font-size:10.2px;font-weight:400;color:#4a5864;transform:scaleX(1.0005);">Decline</span>
<span class="t" style="left:501.25px;top:417px;font-size:10.2px;font-weight:400;color:#4a5864;transform:scaleX(0.9516);">QA, Bim</span>
<span class="t" style="left:576.40px;top:417px;font-size:10.2px;font-weight:400;color:#4a5864;transform:scaleX(0.9922);">Policy Related Document</span>
<span class="t" style="left:727.20px;top:417px;font-size:10.2px;font-weight:400;color:#4a5864;transform:scaleX(0.9971);">Policy Related Document.pdf</span>
<span class="t" style="left:877.80px;top:417px;font-size:10.2px;font-weight:400;color:#4a5864;transform:scaleX(0.9521);">4</span>
<span class="t" style="left:309.30px;top:440px;font-size:10.2px;font-weight:400;color:#4a5864;transform:scaleX(0.9746);">06-03-2025</span>
<span class="t" style="left:388.40px;top:440px;font-size:10.2px;font-weight:400;color:#4a5864;transform:scaleX(0.9598);">Exam</span>
<span class="t" style="left:501.25px;top:440px;font-size:10.2px;font-weight:400;color:#4a5864;transform:scaleX(0.9516);">QA, Bim</span>
<span class="t" style="left:576.40px;top:440px;font-size:10.2px;font-weight:400;color:#4a5864;transform:scaleX(1.0057);">Signature Document</span>
<span class="t" style="left:727.20px;top:440px;font-size:10.2px;font-weight:400;color:#4a5864;transform:scaleX(1.0133);">Signature Document .pdf</span>
<span class="t" style="left:877.80px;top:440px;font-size:10.2px;font-weight:400;color:#4a5864;transform:scaleX(0.9521);">5</span>
<span class="t" style="left:897.30px;top:346px;font-size:10.2px;font-weight:400;color:#fff;transform:scaleX(0.9851);-webkit-text-stroke:0.42px currentColor;">Edit</span>
</body></html>
